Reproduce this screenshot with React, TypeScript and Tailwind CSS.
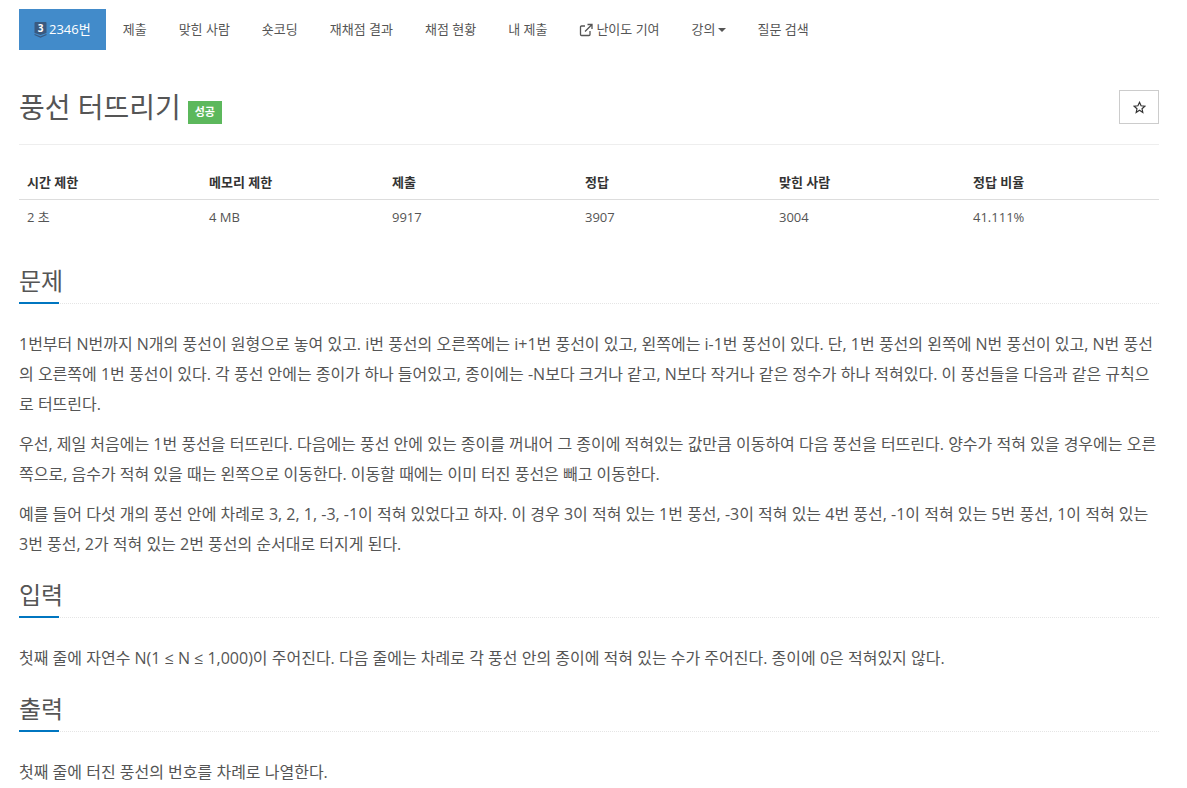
const font = { fontFamily: '"Open Sans", "Noto Sans CJK KR", sans-serif' };

const navItems = ["제출", "맞힌 사람", "숏코딩", "재채점 결과", "채점 현황", "내 제출"];
const stats = [
  ["시간 제한", "2 초"],
  ["메모리 제한", "4 MB"],
  ["제출", "9917"],
  ["정답", "3907"],
  ["맞힌 사람", "3004"],
  ["정답 비율", "41.111%"],
];

function NavLink({ children }: { children: React.ReactNode }) {
  return <a className="flex items-center h-[41px] px-[15px] text-[13px] text-[#555]">{children}</a>;
}

function Heading({ title }: { title: string }) {
  return (
    <div className="border-b border-dotted border-[#e5e5e5] h-[40px] relative">
      <h2 className="text-[24px] leading-[33px] text-[#555]">{title}</h2>
      <div className="absolute left-0 -bottom-px w-10 h-[2px] bg-[#0076c0]" />
    </div>
  );
}

export default function App() {
  return (
    <div style={font} className="w-[1187px] h-[788px] overflow-hidden bg-white px-[19px] pt-[9px] text-[#555]">
      <nav className="flex items-center gap-[2px] w-[1140px]">
        <a className="flex items-center gap-[2px] h-[41px] px-[15px] bg-[#428bca] text-white text-[13px]">
          <svg width="13" height="16" viewBox="0 0 13 16">
            <path d="M0.5 1a1 1 0 0 1 1-1h10a1 1 0 0 1 1 1v10l-6 2-6-2z" fill="#3a5a80" />
            <path d="M0.5 12.5l6 2.5 6-2.5" fill="none" stroke="#3a5a80" strokeWidth="1.2" />
            <text x="6.5" y="9.5" textAnchor="middle" fontSize="10" fontWeight="700" fill="#fff">3</text>
          </svg>
          2346번
        </a>
        {navItems.map((n) => (
          <NavLink key={n}>{n}</NavLink>
        ))}
        <NavLink>
          <svg width="14" height="14" viewBox="0 0 14 14" className="mr-[3px]" fill="none" stroke="#555" strokeWidth="1.3">
            <path d="M11 8v3.5a1 1 0 0 1-1 1H2.5a1 1 0 0 1-1-1V4a1 1 0 0 1 1-1H6" />
            <path d="M6 8.5 12.5 2M8.5 1.5h4.5V6" />
          </svg>
          난이도 기여
        </NavLink>
        <NavLink>
          강의
          <span className="ml-[2px] w-0 h-0 border-x-4 border-x-transparent border-t-4 border-t-[#555]" />
        </NavLink>
        <NavLink>질문 검색</NavLink>
      </nav>

      <div className="flex items-start justify-between w-[1140px] mt-[40px] border-b border-[#eee] h-[55px]">
        <div className="flex items-center h-[34px]">
          <h1 className="text-[28px] leading-[34px] text-[#555]">풍선 터뜨리기</h1>
          <span className="ml-[7px] mt-[10px] bg-[#5cb85c] text-white text-[11px] font-bold w-[34px] h-[23px] flex items-center justify-center">성공</span>
        </div>
        <button className="w-10 h-[34px] border border-[#ccc] flex items-center justify-center text-[#333]">
          <svg width="13" height="13" viewBox="0 0 24 24" fill="none" stroke="#333" strokeWidth="2.2" strokeLinejoin="miter">
            <path d="M12 2.5l2.9 6.3 6.9.8-5.1 4.7 1.4 6.8L12 17.2l-6.1 3.9 1.4-6.8L2.2 9.6l6.9-.8z" />
          </svg>
        </button>
      </div>

      <div className="w-[1140px] mt-[18px] grid grid-cols-[182px_183px_193px_194px_194px_194px] text-[13px]">
        {stats.map(([h]) => (
          <div key={h} className="h-[37px] px-2 pt-[9px] leading-[20px] font-bold text-[#333] border-b border-[#ddd]">{h}</div>
        ))}
        {stats.map(([h, v]) => (
          <div key={h} className="h-[36px] px-2 flex items-center text-[#555]">{v}</div>
        ))}
      </div>

      <section className="w-[1140px] mt-[28px]">
        <Heading title="문제" />
        <div className="mt-[25px] text-[16px] leading-[30px] text-[#555]">
          <p className="mb-[10px]">1번부터 N번까지 N개의 풍선이 원형으로 놓여 있고. i번 풍선의 오른쪽에는 i+1번 풍선이 있고, 왼쪽에는 i-1번 풍선이 있다. 단, 1번 풍선의 왼쪽에 N번 풍선이 있고, N번 풍선의 오른쪽에 1번 풍선이 있다. 각 풍선 안에는 종이가 하나 들어있고, 종이에는 -N보다 크거나 같고, N보다 작거나 같은 정수가 하나 적혀있다. 이 풍선들을 다음과 같은 규칙으로 터뜨린다.</p>
          <p className="mb-[10px]">우선, 제일 처음에는 1번 풍선을 터뜨린다. 다음에는 풍선 안에 있는 종이를 꺼내어 그 종이에 적혀있는 값만큼 이동하여 다음 풍선을 터뜨린다. 양수가 적혀 있을 경우에는 오른쪽으로, 음수가 적혀 있을 때는 왼쪽으로 이동한다. 이동할 때에는 이미 터진 풍선은 빼고 이동한다.</p>
          <p>예를 들어 다섯 개의 풍선 안에 차례로 3, 2, 1, -3, -1이 적혀 있었다고 하자. 이 경우 3이 적혀 있는 1번 풍선, -3이 적혀 있는 4번 풍선, -1이 적혀 있는 5번 풍선, 1이 적혀 있는 3번 풍선, 2가 적혀 있는 2번 풍선의 순서대로 터지게 된다.</p>
        </div>
      </section>

      <section className="w-[1140px] mt-[19px]">
        <Heading title="입력" />
        <p className="mt-[25px] text-[16px] leading-[30px]">첫째 줄에 자연수 N(1 ≤ N ≤ 1,000)이 주어진다. 다음 줄에는 차례로 각 풍선 안의 종이에 적혀 있는 수가 주어진다. 종이에 0은 적혀있지 않다.</p>
      </section>

      <section className="w-[1140px] mt-[19px]">
        <Heading title="출력" />
        <p className="mt-[25px] text-[16px] leading-[30px]">첫째 줄에 터진 풍선의 번호를 차례로 나열한다.</p>
      </section>
    </div>
  );
}
